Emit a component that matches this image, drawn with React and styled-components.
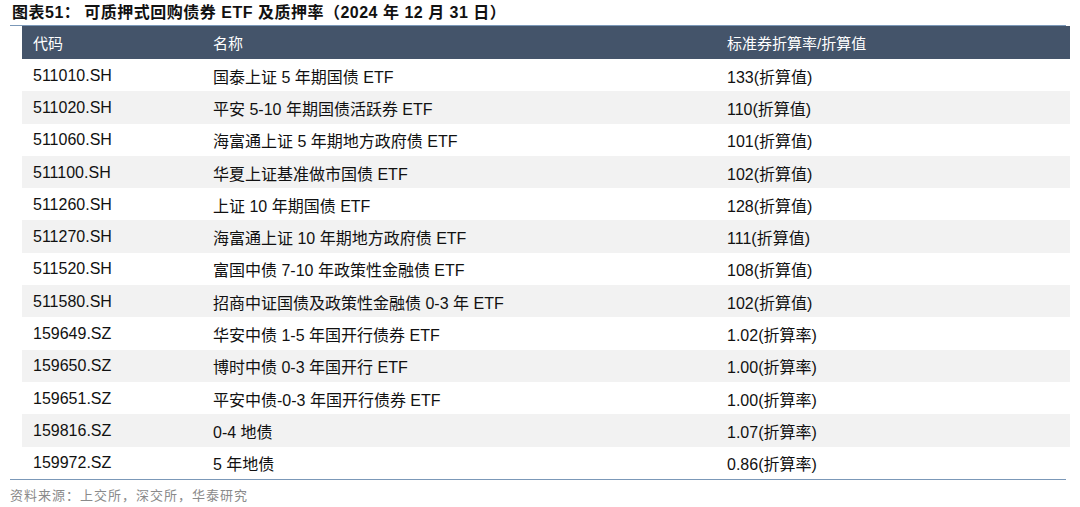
import styled, { createGlobalStyle } from "styled-components";

const GlobalStyle = createGlobalStyle`
  html, body {
    margin: 0;
    padding: 0;
    background: #fff;
  }
  body {
    font-family: "Liberation Sans", "Noto Sans CJK SC", sans-serif;
    color: #111;
  }
`;

const Page = styled.div`
  width: 1080px;
  height: 507px;
  padding: 0 0 0 10px;
  box-sizing: border-box;
  overflow: hidden;
`;

const Title = styled.div`
  width: 1056px;
  height: 26px;
  box-sizing: border-box;
  border-bottom: 1px solid #7b98b8;
  padding: 3px 0 0 2px;
  font-size: 16px;
  font-weight: 700;
  line-height: 19px;
  letter-spacing: 0.5px;
  color: #111;
  white-space: nowrap;
`;

const TitleLabel = styled.span`
  margin-right: 4px;
`;

const Table = styled.div`
  margin-left: 12px;
  width: 1048px;
`;

const Row = styled.div`
  display: grid;
  grid-template-columns: 180px 514px 354px;
  align-items: center;
  height: ${(p) => (p.$head ? "33px" : "32.3px")};
  padding-top: ${(p) => (p.$head ? "0" : "1px")};
  box-sizing: border-box;
  background: ${(p) => (p.$head ? "#44546a" : p.$alt ? "#f2f2f2" : "#fff")};
  color: ${(p) => (p.$head ? "#fff" : "#111")};
  font-size: ${(p) => (p.$head ? "15px" : "16px")};
`;

const Cell = styled.div`
  padding-left: 11px;
  white-space: nowrap;
`;

const BottomRule = styled.div`
  width: 1056px;
  border-top: 1px solid #7b98b8;
`;

const Source = styled.div`
  font-size: 13px;
  letter-spacing: 1px;
  color: #8a8a8a;
  padding-top: 5px;
  font-family: "Noto Sans CJK SC", sans-serif;
`;

const rows = [
  ["511010.SH", "国泰上证 5 年期国债 ETF", "133(折算值)"],
  ["511020.SH", "平安 5-10 年期国债活跃券 ETF", "110(折算值)"],
  ["511060.SH", "海富通上证 5 年期地方政府债 ETF", "101(折算值)"],
  ["511100.SH", "华夏上证基准做市国债 ETF", "102(折算值)"],
  ["511260.SH", "上证 10 年期国债 ETF", "128(折算值)"],
  ["511270.SH", "海富通上证 10 年期地方政府债 ETF", "111(折算值)"],
  ["511520.SH", "富国中债 7-10 年政策性金融债 ETF", "108(折算值)"],
  ["511580.SH", "招商中证国债及政策性金融债 0-3 年 ETF", "102(折算值)"],
  ["159649.SZ", "华安中债 1-5 年国开行债券 ETF", "1.02(折算率)"],
  ["159650.SZ", "博时中债 0-3 年国开行 ETF", "1.00(折算率)"],
  ["159651.SZ", "平安中债-0-3 年国开行债券 ETF", "1.00(折算率)"],
  ["159816.SZ", "0-4 地债", "1.07(折算率)"],
  ["159972.SZ", "5 年地债", "0.86(折算率)"],
];

export default function App() {
  return (
    <Page>
      <GlobalStyle />
      <Title>
        <TitleLabel>图表51：</TitleLabel>
        可质押式回购债券 ETF 及质押率（2024 年 12 月 31 日）
      </Title>
      <Table>
        <Row $head>
          <Cell>代码</Cell>
          <Cell>名称</Cell>
          <Cell>标准券折算率/折算值</Cell>
        </Row>
        {rows.map((r, i) => (
          <Row key={r[0]} $alt={i % 2 === 1}>
            <Cell>{r[0]}</Cell>
            <Cell>{r[1]}</Cell>
            <Cell>{r[2]}</Cell>
          </Row>
        ))}
      </Table>
      <BottomRule />
      <Source>资料来源：上交所，深交所，华泰研究</Source>
    </Page>
  );
}
